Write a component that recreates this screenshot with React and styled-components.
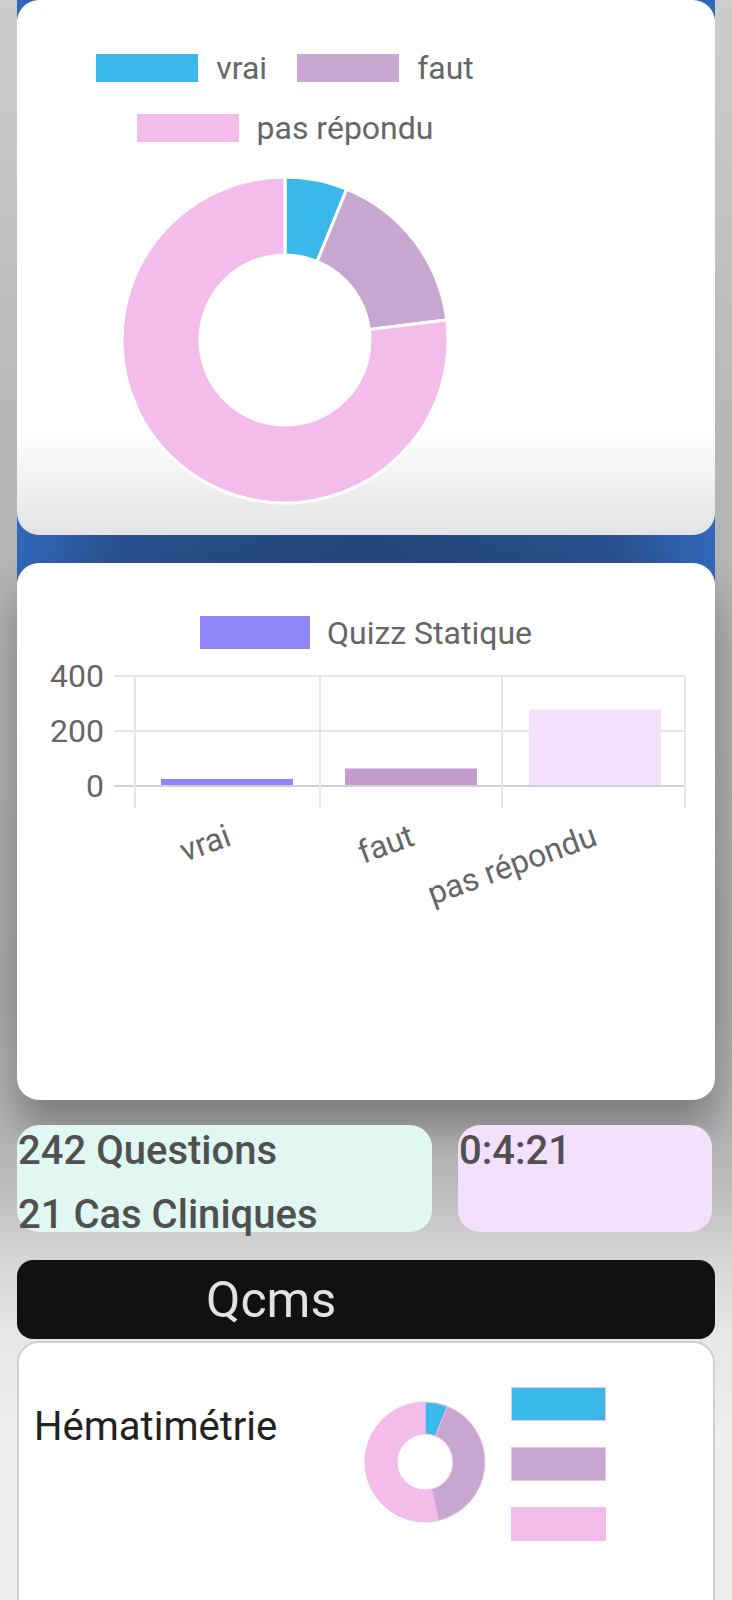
import React from 'react';
import styled, { createGlobalStyle } from 'styled-components';

const GlobalStyle = createGlobalStyle`
  body {
    margin: 0;
    font-family: Roboto, "Noto Sans", sans-serif;
    background: #eceef0;
  }
`;

const pieData = [
  { label: 'vrai', value: 22, color: '#3bb8ea' },
  { label: 'faut', value: 60, color: '#c7a7d0' },
  { label: 'pas répondu', value: 274, color: '#f3bcea' }
];

const bars = [
  { label: 'vrai', value: 22, color: '#8f86f7' },
  { label: 'faut', value: 60, color: '#c39dcb' },
  { label: 'pas répondu', value: 274, color: '#f3e0fb' }
];

const smallPie = [
  { value: 22, color: '#3bb8ea' },
  { value: 145, color: '#c7a7d0' },
  { value: 193, color: '#f3bcea' }
];

const polar = (cx, cy, r, deg) => {
  const a = (deg - 90) * Math.PI / 180;
  return [cx + r * Math.cos(a), cy + r * Math.sin(a)];
};

const arcPath = (cx, cy, R, r, a0, a1) => {
  const large = a1 - a0 > 180 ? 1 : 0;
  const [x0, y0] = polar(cx, cy, R, a0);
  const [x1, y1] = polar(cx, cy, R, a1);
  const [x2, y2] = polar(cx, cy, r, a1);
  const [x3, y3] = polar(cx, cy, r, a0);
  return `M${x0} ${y0} A${R} ${R} 0 ${large} 1 ${x1} ${y1} L${x2} ${y2} A${r} ${r} 0 ${large} 0 ${x3} ${y3} Z`;
};

const Donut = ({ data, outer, inner, stroke, strokeWidth }) => {
  const total = data.reduce((s, d) => s + d.value, 0);
  const size = outer * 2 + 4;
  const c = size / 2;
  let start = 0;
  return (
    <svg width={size} height={size} viewBox={`0 0 ${size} ${size}`}>
      {data.map((d, i) => {
        const end = start + (d.value / total) * 360;
        const path = arcPath(c, c, outer, inner, start, end);
        start = end;
        return <path key={i} d={path} fill={d.color} stroke={stroke} strokeWidth={strokeWidth} />;
      })}
    </svg>
  );
};

const BarChart = () => {
  const zeroY = 130;
  const perUnit = 55 / 200;
  const gridX = [118, 303, 485, 668];
  const ticks = [{ v: 400, y: 20 }, { v: 200, y: 75 }, { v: 0, y: 130 }];
  return (
    <svg width="695" height="300" viewBox="0 0 695 300">
      {ticks.map(t => (
        <g key={t.v}>
          <line x1="97" x2="668" y1={t.y} y2={t.y} stroke={t.v === 0 ? '#cfcfcf' : '#e6e6e6'} strokeWidth="2" />
          <text x="87" y={t.y + 11} textAnchor="end" fontSize="32" fill="#666" fontFamily="Roboto">{t.v}</text>
        </g>
      ))}
      {gridX.map(x => (
        <line key={x} x1={x} x2={x} y1="20" y2="152" stroke="#e6e6e6" strokeWidth="2" />
      ))}
      {bars.map((b, i) => {
        const h = b.value * perUnit;
        const x = 144 + i * 184;
        return <rect key={b.label} x={x} y={zeroY - h - 1} width="132" height={h} fill={b.color} />;
      })}
      {bars.map((b, i) => {
        const tx = (gridX[i] + gridX[i + 1]) / 2 - 3;
        return (
          <text
            key={b.label}
            transform={`translate(${tx} 166) rotate(-20)`}
            textAnchor="end"
            dominantBaseline="hanging"
            fontSize="32"
            fill="#666"
            fontFamily="Roboto"
          >
            {b.label}
          </text>
        );
      })}
    </svg>
  );
};

const App = () => (
  <Page>
    <GlobalStyle />
    <BlueFrame>
      <PieCard>
        <ChartBox>
          <Legend>
            {pieData.map(d => (
              <LegendItem key={d.label}>
                <LegendBox color={d.color} />
                <LegendLabel>{d.label}</LegendLabel>
              </LegendItem>
            ))}
          </Legend>
          <DonutWrap>
            <Donut data={pieData} outer={163} inner={85} stroke="#fff" strokeWidth={3} />
          </DonutWrap>
        </ChartBox>
      </PieCard>
      <BarCard>
        <BarLegend>
          <LegendBox color="#8f86f7" w={110} h={33} />
          <LegendLabel>Quizz Statique</LegendLabel>
        </BarLegend>
        <BarChart />
      </BarCard>
    </BlueFrame>

    <InfoRow>
      <InfoBox tint="#e1f7f1">
        <InfoText>242 Questions</InfoText>
        <InfoText>21 Cas Cliniques</InfoText>
      </InfoBox>
      <InfoBox tint="#f3e0fb">
        <InfoText>0:4:21</InfoText>
      </InfoBox>
    </InfoRow>

    <SectionBar>Qcms</SectionBar>

    <SubjectCard>
      <SubjectTitle>Hématimétrie</SubjectTitle>
      <SmallDonut>
        <Donut data={smallPie} outer={60} inner={28} stroke="#f3bcea" strokeWidth={1} />
      </SmallDonut>
      <SmallLegend>
        {smallPie.map(d => (
          <SmallBox key={d.color} color={d.color} />
        ))}
      </SmallLegend>
    </SubjectCard>
  </Page>
);

export default App;

const Page = styled.div`
  width: 732px;
  min-height: 1600px;
  box-sizing: border-box;
  padding: 0 17px;
  background: linear-gradient(
    to bottom,
    #cdcdcd 0,
    #b6b6b6 450px,
    #acacac 1000px,
    #b9b9b9 1180px,
    #d6d6d6 1260px,
    #e6e7e9 1340px,
    #eceef0 1450px
  );
  overflow: hidden;
`;

const BlueFrame = styled.div`
  display: flex;
  flex-direction: column;
  gap: 28px;
  background: linear-gradient(to right, #3168ba 0%, #284f8c 15%, #244679 50%, #284f8c 85%, #3168ba 100%);
  background-size: 100% 600px;
  background-repeat: no-repeat;
`;

const PieCard = styled.div`
  height: 535px;
  border-radius: 22px;
  background: linear-gradient(to bottom, #ffffff 0%, #ffffff 80%, #e3e3e3 100%);
`;

const ChartBox = styled.div`
  width: 536px;
  padding-top: 54px;
  display: flex;
  flex-direction: column;
  align-items: center;
`;

const Legend = styled.div`
  display: flex;
  flex-wrap: wrap;
  justify-content: center;
  column-gap: 30px;
  row-gap: 32px;
  width: 400px;
`;

const LegendItem = styled.div`
  display: flex;
  align-items: center;
  gap: 18px;
  height: 28px;
`;

const LegendBox = styled.span`
  display: block;
  width: ${p => p.w || 102}px;
  height: ${p => p.h || 28}px;
  background: ${p => p.color};
`;

const LegendLabel = styled.span`
  font-size: 32px;
  line-height: 28px;
  color: #666;
  white-space: nowrap;
`;

const DonutWrap = styled.div`
  margin-top: 33px;
`;

const BarCard = styled.div`
  height: 537px;
  border-radius: 22px;
  background: #fff;
  box-shadow: 0 30px 40px rgba(0, 0, 0, 0.3);
  padding-top: 53px;
  box-sizing: border-box;
`;

const BarLegend = styled.div`
  display: flex;
  align-items: center;
  justify-content: center;
  gap: 17px;
  height: 33px;
  margin-bottom: 7px;
`;

const InfoRow = styled.div`
  display: grid;
  grid-template-columns: 415px 254px;
  gap: 26px;
  margin-top: 25px;
`;

const InfoBox = styled.div`
  height: 107px;
  border-radius: 22px;
  background: ${p => p.tint};
  display: flex;
  flex-direction: column;
  gap: 17px;
  padding: 2px 0 0 1px;
  box-sizing: border-box;
`;

const InfoText = styled.div`
  font-size: 40px;
  font-weight: 500;
  line-height: 47px;
  color: #505050;
  white-space: nowrap;
`;

const SectionBar = styled.div`
  margin-top: 28px;
  height: 79px;
  border-radius: 16px;
  background: #111;
  color: #e2e2e2;
  font-size: 50px;
  display: flex;
  align-items: center;
  padding-left: 189px;
`;

const SubjectCard = styled.div`
  margin-top: 2px;
  height: 300px;
  border: 2px solid #cfcfcf;
  border-radius: 22px;
  background: #fff;
  display: flex;
  align-items: flex-start;
  padding: 44px 0 0 15px;
  box-sizing: border-box;
`;

const SubjectTitle = styled.div`
  width: 329px;
  margin-top: 16px;
  font-size: 40px;
  line-height: 47px;
  color: #222;
`;

const SmallDonut = styled.div`
  margin-top: 13px;
`;

const SmallLegend = styled.div`
  display: flex;
  flex-direction: column;
  gap: 26px;
  margin-left: 24px;
`;

const SmallBox = styled.span`
  display: block;
  width: 93px;
  height: 32px;
  background: ${p => p.color};
  border: 1px solid #f3bcea;
`;
